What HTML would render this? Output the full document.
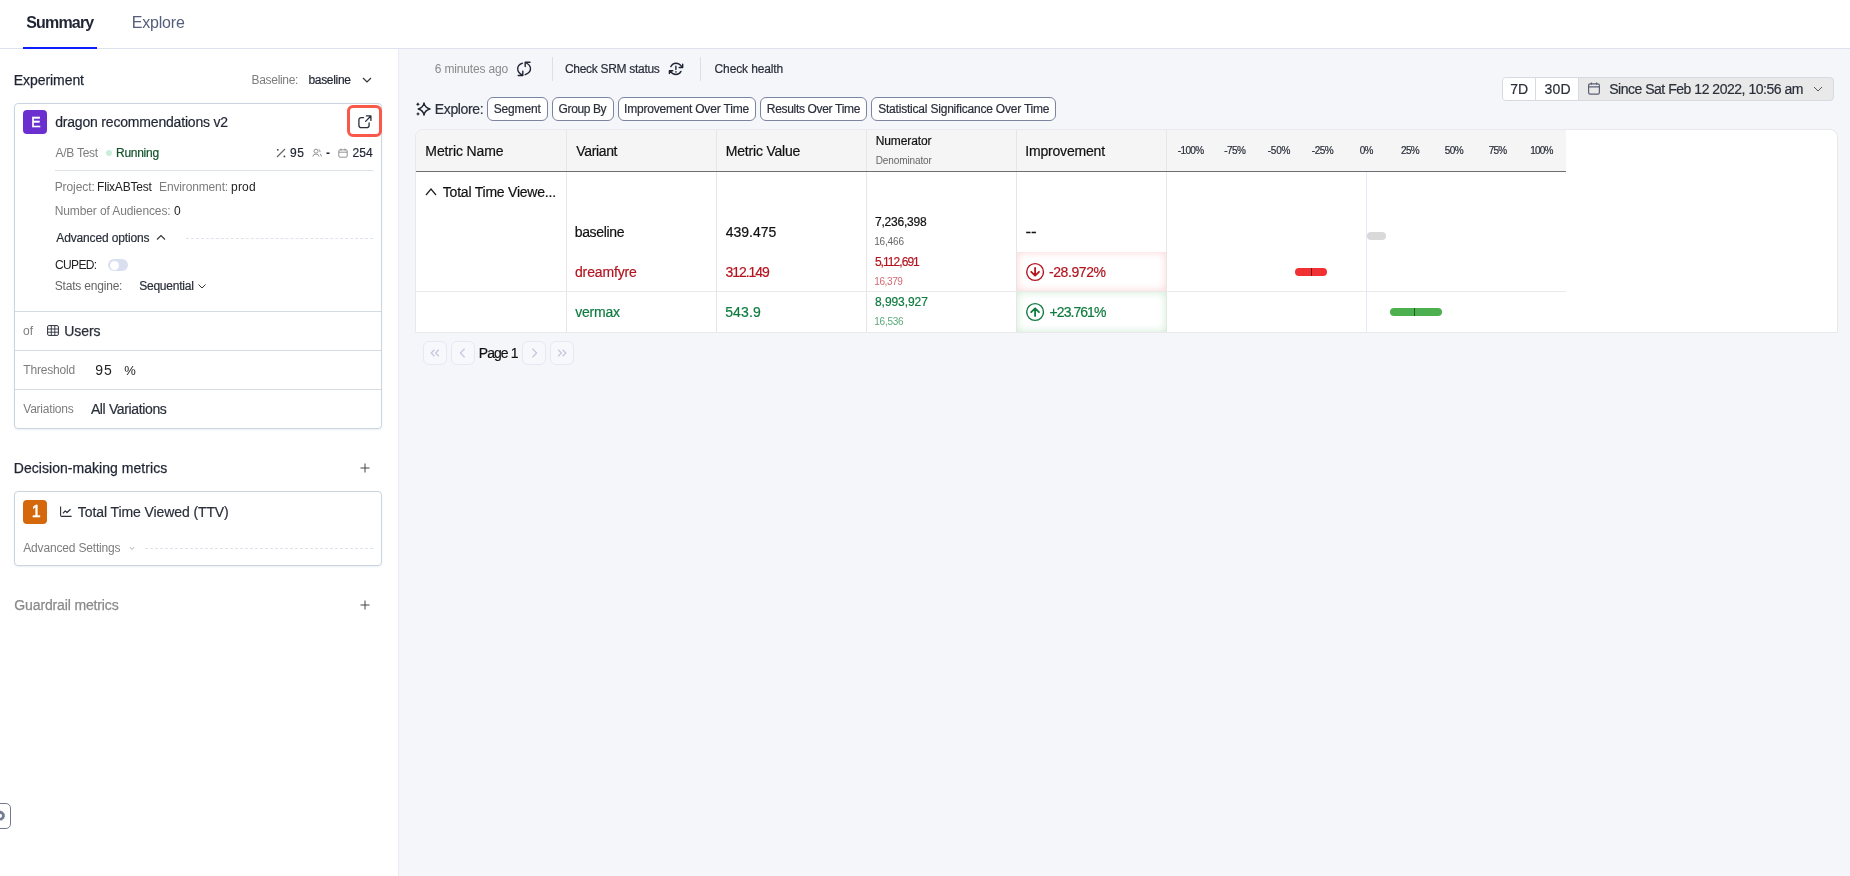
<!DOCTYPE html>
<html lang="en">
<head>
<meta charset="utf-8">
<title>Experiment Summary</title>
<style>
*{box-sizing:border-box;margin:0;padding:0}
html,body{width:1850px;height:876px;overflow:hidden;background:#fff}
body{font-family:"Liberation Sans",sans-serif;color:#1f2533;position:relative;font-size:12px}
.abs{position:absolute;white-space:nowrap}
.t{position:absolute;white-space:nowrap;line-height:1}
#txt{position:absolute;left:0;top:0;width:1850px;height:876px;will-change:transform}
svg{position:absolute;overflow:visible}
#tabs{left:0;top:0;width:1850px;height:49px;border-bottom:1px solid #dde2ee;background:#fff}
#tabline{left:23px;top:47px;width:74px;height:2px;background:#0a1eff}
#side{left:0;top:49px;width:399px;height:827px;background:#fff;border-right:1px solid #e9ecf5}
#main{left:399px;top:49px;width:1451px;height:827px;background:#f5f6fa}
.card{border:1px solid #cbd5df;border-radius:4px;background:#fff;box-shadow:0 1px 2px rgba(30,50,90,.08)}
.hl{height:1px;background:#d3dbe3}
.badge{border-radius:4px;color:#fff;font-weight:bold;text-align:center}
.chip{border:1px solid #7b84a0;border-radius:6px;background:#fff;height:24px;top:97px}
.dash{height:0;border-top:1px dashed #dfe3ea}
.pg{width:24px;height:24px;border:1px solid #e6e9f4;border-radius:6px;background:#f7f8fc;top:341px}
.vl{width:1px;background:#e6e6e6}
.ax{font-size:10px;color:#2a2f3a}
</style>
</head>
<body>
<!-- ===== top tabs ===== -->
<div class="abs" id="tabs"></div>
<div class="abs" id="tabline"></div>

<!-- ===== sidebar ===== -->
<div class="abs" id="side"></div>
<div class="abs" id="main"></div>

<svg style="left:361px;top:76px" width="12" height="8" viewBox="0 0 12 8"><path d="M2 2 L6 6 L10 2" fill="none" stroke="#333" stroke-width="1.2"/></svg>

<div class="abs card" style="left:14px;top:103px;width:368px;height:326px"></div>
<div class="abs badge" style="left:23px;top:110px;width:24px;height:24px;background:#6b2ecf;font-size:14px;line-height:24px"></div>
<div class="abs" style="left:347px;top:105px;width:35px;height:32px;border:3px solid #f9594a;border-radius:6px;background:#fff"></div>
<svg style="left:358px;top:115px" width="14" height="14" viewBox="0 0 14 14"><path d="M5.6 2.6 H3.4 Q.9 2.6 .9 5.1 V10.2 Q.9 12.7 3.4 12.7 H8.6 Q11.1 12.7 11.1 10.2 V8" fill="none" stroke="#2a2f3a" stroke-width="1.3" stroke-linecap="round" stroke-linejoin="round"/><path d="M8.4 .9 H12.9 V5.4 M12.6 1.2 L7.6 6.4" fill="none" stroke="#2a2f3a" stroke-width="1.3" stroke-linecap="round" stroke-linejoin="round"/></svg>

<div class="abs" style="left:106px;top:150px;width:6px;height:6px;border-radius:50%;background:#c9eedb"></div>
<svg style="left:276px;top:148px" width="10" height="10" viewBox="0 0 10 10"><path d="M1 9 L9 1" stroke="#6a6a6a" stroke-width="1.3" fill="none"/><circle cx="1.8" cy="1.8" r=".9" fill="#3a3a3a"/><circle cx="8.4" cy="8.4" r=".9" fill="#3a3a3a"/></svg>
<svg style="left:312px;top:148px" width="10" height="10" viewBox="0 0 10 10"><circle cx="4" cy="3.2" r="2" fill="none" stroke="#888" stroke-width=".9"/><path d="M.8 8.6 Q1 6 4 6 Q6.5 6 7 8.6 M6.5 1.5 Q8.5 2 8 4.2 M8 6 Q9.3 6.5 9.4 8.4" fill="none" stroke="#888" stroke-width=".9"/></svg>
<svg style="left:338px;top:148px" width="10" height="10" viewBox="0 0 10 10"><rect x=".8" y="1.8" width="8.4" height="7.4" rx="1.2" fill="none" stroke="#888" stroke-width=".9"/><path d="M.8 4.2 H9.2 M3 .6 V2.6 M7 .6 V2.6" stroke="#888" stroke-width=".9" fill="none"/></svg>
<div class="abs hl" style="left:55px;top:170px;width:318px;background:#dde2e8"></div>


<svg style="left:156px;top:234px" width="10" height="7" viewBox="0 0 10 7"><path d="M1 5.5 L5 1.5 L9 5.5" fill="none" stroke="#333" stroke-width="1.1"/></svg>
<div class="abs dash" style="left:186px;top:238px;width:187px"></div>
<div class="abs" style="left:108px;top:259px;width:20px;height:12px;border-radius:6px;background:#dadff0"></div>
<div class="abs" style="left:109.5px;top:260.5px;width:9px;height:9px;border-radius:50%;background:#fff"></div>
<svg style="left:197px;top:283px" width="10" height="7" viewBox="0 0 10 7"><path d="M1.5 1.5 L5 5 L8.5 1.5" fill="none" stroke="#333" stroke-width="1"/></svg>

<div class="abs hl" style="left:15px;top:311px;width:366px"></div>
<svg style="left:47px;top:325px" width="12" height="11" viewBox="0 0 12 11"><rect x=".6" y=".6" width="10.8" height="9.8" rx="1.3" fill="none" stroke="#2a2f3a" stroke-width="1"/><path d="M.6 4 H11.4 M.6 7.2 H11.4 M4.3 .6 V10.4 M7.8 .6 V10.4" stroke="#2a2f3a" stroke-width=".9" fill="none"/></svg>
<div class="abs hl" style="left:15px;top:350px;width:366px"></div>
<div class="abs hl" style="left:15px;top:389px;width:366px"></div>

<svg style="left:360px;top:463px" width="10" height="10" viewBox="0 0 10 10"><path d="M5 .5 V9.5 M.5 5 H9.5" stroke="#444" stroke-width="1" fill="none"/></svg>
<div class="abs card" style="left:14px;top:491px;width:368px;height:75px"></div>
<div class="abs badge" style="left:23px;top:500px;width:24px;height:24px;background:#d4680a;font-size:14px;line-height:24px;font-weight:normal"></div>
<svg style="left:60px;top:506px" width="12" height="11" viewBox="0 0 12 11"><path d="M.6 .5 V9.2 Q.6 10.4 1.8 10.4 H11.6" fill="none" stroke="#2a2f3a" stroke-width="1.1"/><path d="M2.9 7.4 L5.2 4.9 L7 6.5 L10.5 3.2" fill="none" stroke="#2a2f3a" stroke-width="1.2" stroke-linejoin="round"/></svg>
<svg style="left:129px;top:546px" width="6" height="5" viewBox="0 0 6 5"><path d="M1 1.2 L3 3.4 L5 1.2" fill="none" stroke="#999" stroke-width=".8"/></svg>
<div class="abs dash" style="left:145px;top:548px;width:228px"></div>

<svg style="left:360px;top:600px" width="10" height="10" viewBox="0 0 10 10"><path d="M5 .5 V9.5 M.5 5 H9.5" stroke="#444" stroke-width="1" fill="none"/></svg>

<div class="abs" style="left:-6px;top:803px;width:17px;height:26px;border:1px solid #727a94;border-radius:5px;background:#fff"></div>
<svg style="left:0;top:810px" width="6" height="12" viewBox="0 0 6 12"><circle cx="0" cy="5.8" r="3.4" fill="none" stroke="#737a92" stroke-width="2.6"/><circle cx="0" cy="5.8" r="4.7" fill="none" stroke="#737a92" stroke-width=".8" stroke-dasharray="1.2 1.2"/></svg>

<!-- ===== main toolbar ===== -->
<svg style="left:517px;top:61px" width="14" height="16" viewBox="0 0 14 16"><path d="M5.5 2.2 Q.7 4 .7 7.7 Q.7 11.5 5.4 14.2 M1.2 14.5 H5.8 V10.1 M8.2 13.7 Q13.5 11.5 13.5 7.7 Q13.5 4 8.6 1.5 M13 1.2 H8.2 V5.6" fill="none" stroke="#1f2533" stroke-width="1.4" stroke-linecap="round" stroke-linejoin="round"/></svg>
<div class="abs" style="left:552px;top:57px;width:1px;height:24px;background:#dcdfe8"></div>
<svg style="left:669px;top:62px" width="15" height="14" viewBox="0 0 15 14"><path d="M1.8 4.6 Q3.5 1.2 6.9 1.2 Q10.5 1.2 12.9 4.8 M13.7 2.2 V5.5 H10.2 M12 9.4 Q10.4 12.5 6.9 12.5 Q3.4 12.5 1.2 9.2 M.4 11.5 V8.8 H3.8 M6.9 4.3 V7.4" fill="none" stroke="#1f2533" stroke-width="1.4" stroke-linecap="round" stroke-linejoin="round"/><circle cx="6.9" cy="9.9" r=".8" fill="#1f2533"/></svg>
<div class="abs" style="left:700px;top:57px;width:1px;height:24px;background:#dcdfe8"></div>

<!-- explore chips -->
<svg style="left:416px;top:101px" width="15" height="16" viewBox="0 0 15 16"><path d="M8 1.9 Q8.8 6.8 14 8 Q8.8 9.2 8 14.1 Q7.2 9.2 2.2 8 Q7.2 6.8 8 1.9 Z" fill="none" stroke="#1f2533" stroke-width="1.4" stroke-linejoin="round"/><path d="M1.9 1.2 L2.6 2.5 L3.9 3.2 L2.6 3.9 L1.9 5.2 L1.2 3.9 L-.1 3.2 L1.2 2.5 Z M2 10.9 L2.7 12.2 L4 12.9 L2.7 13.6 L2 14.9 L1.3 13.6 L0 12.9 L1.3 12.2 Z" fill="#1f2533"/></svg>
<div class="abs chip" style="left:487px;width:61px"></div>
<div class="abs chip" style="left:552px;width:62px"></div>
<div class="abs chip" style="left:618px;width:138px"></div>
<div class="abs chip" style="left:760px;width:107px"></div>
<div class="abs chip" style="left:871px;width:185px"></div>

<!-- date range -->
<div class="abs" style="left:1502px;top:77px;width:332px;height:24px;border:1px solid #d6dae3;border-radius:4px;background:#e9e9e9;overflow:hidden">
  <div class="abs" style="left:0;top:0;width:33px;height:22px;background:#fff;border-right:1px solid #d6dae3"></div>
  <div class="abs" style="left:33px;top:0;width:43px;height:22px;background:#fff;border-right:1px solid #d6dae3"></div>
</div>
<svg style="left:1588px;top:82px" width="12" height="13" viewBox="0 0 12 13"><rect x=".6" y="1.8" width="10.8" height="10.4" rx="1.6" fill="none" stroke="#5b6075" stroke-width="1.2"/><path d="M.6 4.8 H11.4 M3.4 .4 V2.8 M8.6 .4 V2.8" stroke="#5b6075" stroke-width="1.2" fill="none"/></svg>
<svg style="left:1813px;top:86px" width="10" height="6" viewBox="0 0 10 6"><path d="M1 1 L5 5 L9 1" fill="none" stroke="#555" stroke-width="1"/></svg>

<!-- table -->
<div class="abs" style="left:415px;top:129px;width:1423px;height:204px;background:#fff;border:1px solid #e9e9ec;border-radius:8px 8px 0 0"></div>
<div class="abs" style="left:416px;top:130px;width:1150px;height:41px;background:#f5f5f5;border-radius:7px 0 0 0"></div>
<div class="abs vl" style="left:566px;top:130px;height:202px"></div>
<div class="abs vl" style="left:716px;top:130px;height:202px"></div>
<div class="abs vl" style="left:866px;top:130px;height:202px"></div>
<div class="abs vl" style="left:1016px;top:130px;height:202px"></div>
<div class="abs vl" style="left:1166px;top:130px;height:202px"></div>
<div class="abs" style="left:1366px;top:172px;width:1px;height:160px;background:#e6e6fa"></div>
<div class="abs" style="left:416px;top:171px;width:1150px;height:1px;background:#6e6e6e"></div>
<div class="abs" style="left:416px;top:291px;width:1150px;height:1px;background:#e9e9ec"></div>
<svg style="left:425px;top:187px" width="12" height="9" viewBox="0 0 12 9"><path d="M1 8 L6 2 L11 8" fill="none" stroke="#222" stroke-width="1.2"/></svg>

<div class="abs" style="left:1367px;top:232px;width:19px;height:8px;border-radius:4px;background:#d9d9d9"></div>

<div class="abs" style="left:1017px;top:252px;width:149px;height:39px;background:#fff;box-shadow:inset 0 0 8px 0 #fcd2d5"></div>
<svg style="left:1025px;top:262px" width="20" height="20" viewBox="0 0 20 20"><circle cx="10.1" cy="10" r="8.4" fill="none" stroke="#b3141f" stroke-width="1.4"/><path d="M10.1 6 V13.4 M6.2 9.8 L10.1 13.7 L14 9.8" fill="none" stroke="#b3141f" stroke-width="1.8" stroke-linecap="round" stroke-linejoin="round"/></svg>
<div class="abs" style="left:1295px;top:268px;width:32px;height:8px;border-radius:4px;background:#f03033"></div>
<div class="abs" style="left:1311px;top:268px;width:1px;height:8px;background:#7a1518"></div>

<div class="abs" style="left:1017px;top:292px;width:149px;height:40px;background:#fff;box-shadow:inset 0 0 8px 0 #cdebd1"></div>
<svg style="left:1025px;top:302px" width="20" height="20" viewBox="0 0 20 20"><circle cx="10.1" cy="10" r="8.4" fill="none" stroke="#0f7b3f" stroke-width="1.4"/><path d="M10.1 14 V6.6 M6.2 10.2 L10.1 6.3 L14 10.2" fill="none" stroke="#0f7b3f" stroke-width="1.8" stroke-linecap="round" stroke-linejoin="round"/></svg>
<div class="abs" style="left:1390px;top:308px;width:52px;height:8px;border-radius:4px;background:#4caf50"></div>
<div class="abs" style="left:1414px;top:308px;width:1px;height:8px;background:#1f5c22"></div>

<!-- pagination -->
<div class="abs pg" style="left:423px"></div>
<div class="abs pg" style="left:451px"></div>
<div class="abs pg" style="left:522px"></div>
<div class="abs pg" style="left:550px"></div>
<svg style="left:430px;top:349px" width="10" height="8" viewBox="0 0 10 8"><path d="M4.4 .8 L1.2 4 L4.4 7.2 M8.8 .8 L5.6 4 L8.8 7.2" fill="none" stroke="#c3c8dc" stroke-width="1.3"/></svg>
<svg style="left:459px;top:348px" width="7" height="10" viewBox="0 0 7 10"><path d="M5.6 .8 L1.4 5 L5.6 9.2" fill="none" stroke="#c3c8dc" stroke-width="1.3"/></svg>
<svg style="left:531px;top:348px" width="7" height="10" viewBox="0 0 7 10"><path d="M1.4 .8 L5.6 5 L1.4 9.2" fill="none" stroke="#c3c8dc" stroke-width="1.3"/></svg>
<svg style="left:557px;top:349px" width="10" height="8" viewBox="0 0 10 8"><path d="M1.2 .8 L4.4 4 L1.2 7.2 M5.6 .8 L8.8 4 L5.6 7.2" fill="none" stroke="#c3c8dc" stroke-width="1.3"/></svg>

<div id="txt">
<div class="t" id="tSummary" style="left:26.25px;top:15px;font-size:16px;color:#1f2533;letter-spacing:-0.832px;font-weight:bold">Summary</div>
<div class="t" id="tExplore" style="left:131.67px;top:15px;font-size:16px;color:#555e7a;letter-spacing:-0.183px;">Explore</div>
<div class="t" id="tExperiment" style="left:13.8px;top:73px;font-size:14px;color:#1f2533;letter-spacing:-0.067px;-webkit-text-stroke:.25px #1f2533">Experiment</div>
<div class="t" id="tBaselineL" style="left:251.5px;top:74px;font-size:12px;color:#7d7d7d;letter-spacing:-0.302px;">Baseline:</div>
<div class="t" id="tBaselineV" style="left:308.45px;top:74px;font-size:12px;color:#1f2533;letter-spacing:-0.318px;-webkit-text-stroke:.2px #1f2533">baseline</div>
<div class="t" id="tDragon" style="left:55.18px;top:115px;font-size:14px;color:#1f2533;letter-spacing:-0.186px;-webkit-text-stroke:.2px #1f2533">dragon recommendations v2</div>
<div class="t" id="tAB" style="left:55.46px;top:147px;font-size:12px;color:#7d7d7d;letter-spacing:-0.245px;">A/B Test</div>
<div class="t" id="tRunning" style="left:116.03px;top:147px;font-size:12px;color:#14532d;letter-spacing:-0.27px;-webkit-text-stroke:.2px #14532d">Running</div>
<div class="t" id="t95" style="left:289.99px;top:147px;font-size:12px;color:#1f2533;letter-spacing:0.486px;-webkit-text-stroke:.2px #1f2533">95</div>
<div class="t" id="tDash" style="left:326.02px;top:147px;font-size:12px;color:#1f2533;font-weight:bold">-</div>
<div class="t" id="t254" style="left:352.59px;top:147px;font-size:12px;color:#1f2533;letter-spacing:-0.022px;-webkit-text-stroke:.2px #1f2533">254</div>
<div class="t" id="tProjL" style="left:54.7px;top:181px;font-size:12px;color:#7d7d7d;letter-spacing:-0.093px;">Project:</div>
<div class="t" id="tProjV" style="left:97.1px;top:181px;font-size:12px;color:#222;letter-spacing:-0.223px;">FlixABTest</div>
<div class="t" id="tEnvL" style="left:159.1px;top:181px;font-size:12px;color:#7d7d7d;letter-spacing:-0.15px;">Environment:</div>
<div class="t" id="tEnvV" style="left:231.1px;top:181px;font-size:12px;color:#222;letter-spacing:0.147px;">prod</div>
<div class="t" id="tNumL" style="left:54.7px;top:205px;font-size:12px;color:#7d7d7d;letter-spacing:-0.113px;">Number of Audiences:</div>
<div class="t" id="tNumV" style="left:173.99px;top:205px;font-size:12px;color:#222;">0</div>
<div class="t" id="tAdvOpt" style="left:56.32px;top:232px;font-size:12px;color:#2a2f3a;letter-spacing:-0.144px;-webkit-text-stroke:.2px #2a2f3a">Advanced options</div>
<div class="t" id="tCuped" style="left:55.06px;top:259px;font-size:12px;color:#222;letter-spacing:-0.665px;">CUPED:</div>
<div class="t" id="tStatsL" style="left:54.7px;top:280px;font-size:12px;color:#666;letter-spacing:-0.191px;">Stats engine:</div>
<div class="t" id="tStatsV" style="left:139.16px;top:280px;font-size:12px;color:#2a2f3a;letter-spacing:-0.228px;-webkit-text-stroke:.2px #2a2f3a">Sequential</div>
<div class="t" id="tOf" style="left:22.96px;top:325px;font-size:12px;color:#7d7d7d;letter-spacing:0.09px;">of</div>
<div class="t" id="tUsers" style="left:64.15px;top:324px;font-size:14px;color:#2a2f3a;letter-spacing:-0.05px;-webkit-text-stroke:.25px #2a2f3a">Users</div>
<div class="t" id="tThresh" style="left:23.22px;top:364px;font-size:12px;color:#7d7d7d;letter-spacing:-0.17px;">Threshold</div>
<div class="t" id="tTh95" style="left:95.36px;top:363px;font-size:14px;color:#222;letter-spacing:0.737px;">95</div>
<div class="t" id="tThPct" style="left:124.37px;top:364px;font-size:13px;color:#222;">%</div>
<div class="t" id="tVarL" style="left:23.25px;top:403px;font-size:12px;color:#7d7d7d;letter-spacing:-0.221px;">Variations</div>
<div class="t" id="tVarV" style="left:90.9px;top:402px;font-size:14px;color:#2a2f3a;letter-spacing:-0.361px;-webkit-text-stroke:.2px #2a2f3a">All Variations</div>
<div class="t" id="tDecision" style="left:13.8px;top:461px;font-size:14px;color:#1f2533;letter-spacing:0.041px;-webkit-text-stroke:.25px #1f2533">Decision-making metrics</div>
<div class="t" id="tTTV" style="left:77.83px;top:505px;font-size:14px;color:#2a2f3a;letter-spacing:-0.094px;-webkit-text-stroke:.2px #2a2f3a">Total Time Viewed (TTV)</div>
<div class="t" id="tAdvSet" style="left:23.26px;top:542px;font-size:12px;color:#7d7d7d;letter-spacing:-0.169px;">Advanced Settings</div>
<div class="t" id="tGuard" style="left:14.34px;top:598px;font-size:14px;color:#8a8a8a;letter-spacing:-0.138px;-webkit-text-stroke:.25px #8a8a8a">Guardrail metrics</div>
<div class="t" id="bE" style="left:31.19px;top:115px;font-size:14px;color:#fff;-webkit-text-stroke:.5px #fff">E</div>
<div class="t" id="b1" style="left:31.7px;top:504px;font-size:16px;color:#fff;-webkit-text-stroke:.5px #fff">1</div>
<div class="t" id="tAgo" style="left:434.85px;top:63px;font-size:12px;color:#8a8a8a;letter-spacing:-0.167px;">6 minutes ago</div>
<div class="t" id="tSRM" style="left:564.98px;top:63px;font-size:12px;color:#2a2f3a;letter-spacing:-0.3px;-webkit-text-stroke:.2px #2a2f3a">Check SRM status</div>
<div class="t" id="tHealth" style="left:714.58px;top:63px;font-size:12px;color:#2a2f3a;letter-spacing:-0.125px;-webkit-text-stroke:.2px #2a2f3a">Check health</div>
<div class="t" id="tExploreL" style="left:434.76px;top:102px;font-size:14px;color:#2a2f3a;letter-spacing:-0.355px;-webkit-text-stroke:.2px #2a2f3a">Explore:</div>
<div class="t" id="tc1" style="left:493.76px;top:103px;font-size:12px;color:#2a2f3a;letter-spacing:-0.171px;-webkit-text-stroke:.2px #2a2f3a">Segment</div>
<div class="t" id="tc2" style="left:558.58px;top:103px;font-size:12px;color:#2a2f3a;letter-spacing:-0.381px;-webkit-text-stroke:.2px #2a2f3a">Group By</div>
<div class="t" id="tc3" style="left:623.99px;top:103px;font-size:12px;color:#2a2f3a;letter-spacing:-0.178px;-webkit-text-stroke:.2px #2a2f3a">Improvement Over Time</div>
<div class="t" id="tc4" style="left:766.83px;top:103px;font-size:12px;color:#2a2f3a;letter-spacing:-0.325px;-webkit-text-stroke:.2px #2a2f3a">Results Over Time</div>
<div class="t" id="tc5" style="left:878.16px;top:103px;font-size:12px;color:#2a2f3a;letter-spacing:-0.204px;-webkit-text-stroke:.2px #2a2f3a">Statistical Significance Over Time</div>
<div class="t" id="t7D" style="left:1510.32px;top:82px;font-size:14px;color:#2a2f3a;letter-spacing:-0.051px;-webkit-text-stroke:.2px #2a2f3a">7D</div>
<div class="t" id="t30D" style="left:1544.59px;top:82px;font-size:14px;color:#2a2f3a;letter-spacing:0.214px;-webkit-text-stroke:.2px #2a2f3a">30D</div>
<div class="t" id="tSince" style="left:1609.14px;top:82px;font-size:14px;color:#2a2f3a;letter-spacing:-0.474px;-webkit-text-stroke:.2px #2a2f3a">Since Sat Feb 12 2022, 10:56 am</div>
<div class="t" id="th1" style="left:425.36px;top:144px;font-size:14px;color:#111;letter-spacing:-0.11px;-webkit-text-stroke:.2px #111">Metric Name</div>
<div class="t" id="th2" style="left:576.28px;top:144px;font-size:14px;color:#111;letter-spacing:-0.352px;-webkit-text-stroke:.2px #111">Variant</div>
<div class="t" id="th3" style="left:725.76px;top:144px;font-size:14px;color:#111;letter-spacing:-0.192px;-webkit-text-stroke:.2px #111">Metric Value</div>
<div class="t" id="th4" style="left:875.63px;top:135px;font-size:12px;color:#111;letter-spacing:-0.095px;-webkit-text-stroke:.2px #111">Numerator</div>
<div class="t" id="th4b" style="left:875.67px;top:156px;font-size:10px;color:#666;letter-spacing:-0.102px;">Denominator</div>
<div class="t" id="th5" style="left:1025.25px;top:144px;font-size:14px;color:#111;letter-spacing:-0.184px;-webkit-text-stroke:.2px #111">Improvement</div>
<div class="t" id="ax1" style="left:1177.8px;top:146px;font-size:10px;color:#2a2f3a;letter-spacing:-0.645px;-webkit-text-stroke:.2px #2a2f3a">-100%</div>
<div class="t" id="ax2" style="left:1224.2px;top:146px;font-size:10px;color:#2a2f3a;letter-spacing:-0.533px;-webkit-text-stroke:.2px #2a2f3a">-75%</div>
<div class="t" id="ax3" style="left:1267.8px;top:146px;font-size:10px;color:#2a2f3a;letter-spacing:-0.268px;-webkit-text-stroke:.2px #2a2f3a">-50%</div>
<div class="t" id="ax4" style="left:1311.8px;top:146px;font-size:10px;color:#2a2f3a;letter-spacing:-0.467px;-webkit-text-stroke:.2px #2a2f3a">-25%</div>
<div class="t" id="ax5" style="left:1359.74px;top:146px;font-size:10px;color:#2a2f3a;letter-spacing:-0.89px;-webkit-text-stroke:.2px #2a2f3a">0%</div>
<div class="t" id="ax6" style="left:1401.07px;top:146px;font-size:10px;color:#2a2f3a;letter-spacing:-0.662px;-webkit-text-stroke:.2px #2a2f3a">25%</div>
<div class="t" id="ax7" style="left:1444.67px;top:146px;font-size:10px;color:#2a2f3a;letter-spacing:-0.46px;-webkit-text-stroke:.2px #2a2f3a">50%</div>
<div class="t" id="ax8" style="left:1488.64px;top:146px;font-size:10px;color:#2a2f3a;letter-spacing:-0.73px;-webkit-text-stroke:.2px #2a2f3a">75%</div>
<div class="t" id="ax9" style="left:1530.26px;top:146px;font-size:10px;color:#2a2f3a;letter-spacing:-0.834px;-webkit-text-stroke:.2px #2a2f3a">100%</div>
<div class="t" id="tTotal" style="left:442.83px;top:185px;font-size:14px;color:#111;letter-spacing:-0.224px;-webkit-text-stroke:.2px #111">Total Time Viewe...</div>
<div class="t" id="r1a" style="left:574.74px;top:225px;font-size:14px;color:#111;letter-spacing:-0.352px;-webkit-text-stroke:.2px #111">baseline</div>
<div class="t" id="r1b" style="left:725.63px;top:225px;font-size:14px;color:#111;letter-spacing:0.018px;-webkit-text-stroke:.2px #111">439.475</div>
<div class="t" id="r1c" style="left:875.05px;top:216px;font-size:12px;color:#111;letter-spacing:-0.228px;-webkit-text-stroke:.2px #111">7,236,398</div>
<div class="t" id="r1d" style="left:874.24px;top:237px;font-size:10px;color:#666;letter-spacing:-0.171px;">16,466</div>
<div class="t" id="r1e" style="left:1025.5px;top:223px;font-size:17px;color:#111;letter-spacing:-0.216px;-webkit-text-stroke:.2px #111">--</div>
<div class="t" id="r2a" style="left:574.98px;top:265px;font-size:14px;color:#b3141f;letter-spacing:-0.145px;-webkit-text-stroke:.2px #b3141f">dreamfyre</div>
<div class="t" id="r2b" style="left:725.39px;top:265px;font-size:14px;color:#b3141f;letter-spacing:-1.015px;-webkit-text-stroke:.2px #b3141f">312.149</div>
<div class="t" id="r2c" style="left:874.89px;top:256px;font-size:12px;color:#b3141f;letter-spacing:-0.948px;-webkit-text-stroke:.2px #b3141f">5,112,691</div>
<div class="t" id="r2d" style="left:874.24px;top:277px;font-size:10px;color:#d46a72;letter-spacing:-0.386px;">16,379</div>
<div class="t" id="r2e" style="left:1048.99px;top:265px;font-size:14px;color:#b3141f;letter-spacing:-0.406px;-webkit-text-stroke:.2px #b3141f">-28.972%</div>
<div class="t" id="r3a" style="left:575.32px;top:305px;font-size:14px;color:#0f7b3f;letter-spacing:-0.251px;-webkit-text-stroke:.2px #0f7b3f">vermax</div>
<div class="t" id="r3b" style="left:725.21px;top:305px;font-size:14px;color:#0f7b3f;letter-spacing:0.118px;-webkit-text-stroke:.2px #0f7b3f">543.9</div>
<div class="t" id="r3c" style="left:875.03px;top:296px;font-size:12px;color:#0f7b3f;letter-spacing:-0.07px;-webkit-text-stroke:.2px #0f7b3f">8,993,927</div>
<div class="t" id="r3d" style="left:874.24px;top:317px;font-size:10px;color:#5aa87a;letter-spacing:-0.234px;">16,536</div>
<div class="t" id="r3e" style="left:1049.58px;top:305px;font-size:14px;color:#0f7b3f;letter-spacing:-0.944px;-webkit-text-stroke:.2px #0f7b3f">+23.761%</div>
<div class="t" id="tPage" style="left:478.76px;top:346px;font-size:14px;color:#111;letter-spacing:-0.935px;-webkit-text-stroke:.2px #111">Page 1</div>
</div>
</body>
</html>
